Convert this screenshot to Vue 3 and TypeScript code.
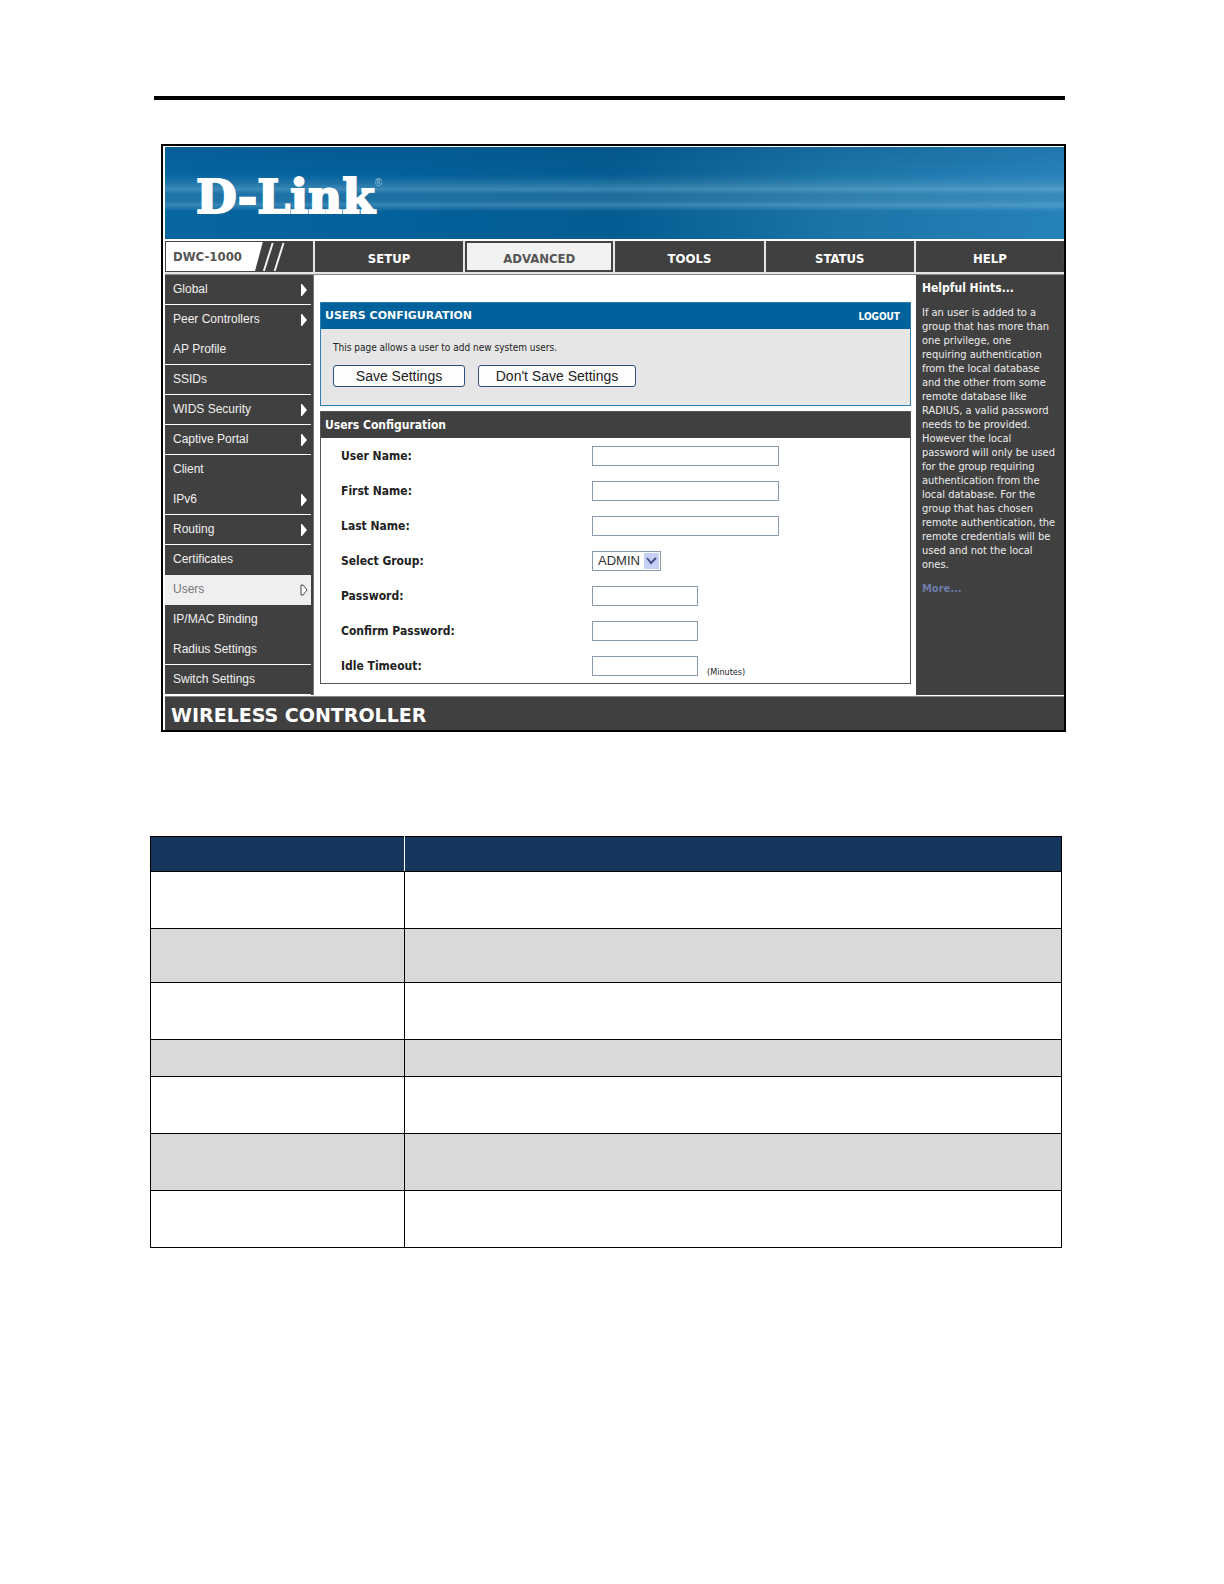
<script setup lang="ts">
import { ref } from 'vue'

interface SideItem {
  label: string
  arrow?: boolean
  line?: boolean
  active?: boolean
}

interface Field {
  id: string
  label: string
  kind: 'text' | 'password' | 'select'
  short?: boolean
  note?: string
}

const tabs = ['SETUP', 'ADVANCED', 'TOOLS', 'STATUS', 'HELP']
const activeTab = ref('ADVANCED')

const sideItems: SideItem[] = [
  { label: 'Global', arrow: true, line: true },
  { label: 'Peer Controllers', arrow: true },
  { label: 'AP Profile', line: true },
  { label: 'SSIDs', line: true },
  { label: 'WIDS Security', arrow: true, line: true },
  { label: 'Captive Portal', arrow: true, line: true },
  { label: 'Client' },
  { label: 'IPv6', arrow: true, line: true },
  { label: 'Routing', arrow: true, line: true },
  { label: 'Certificates' },
  { label: 'Users', arrow: true, active: true },
  { label: 'IP/MAC Binding' },
  { label: 'Radius Settings', line: true },
  { label: 'Switch Settings', line: true },
]

const fields: Field[] = [
  { id: 'user-name', label: 'User Name:', kind: 'text' },
  { id: 'first-name', label: 'First Name:', kind: 'text' },
  { id: 'last-name', label: 'Last Name:', kind: 'text' },
  { id: 'group', label: 'Select Group:', kind: 'select' },
  { id: 'password', label: 'Password:', kind: 'password', short: true },
  { id: 'confirm', label: 'Confirm Password:', kind: 'password', short: true },
  { id: 'idle', label: 'Idle Timeout:', kind: 'text', short: true, note: '(Minutes)' },
]

const rowSizes = ['tall', 'mid', 'tall', 'low', 'tall', 'tall', 'tall']
</script>

<template>
  <main class="page">
    <hr class="rule" />

    <section class="frame">
      <header class="banner">
        <div class="logo">D-Link<sup>®</sup></div>
      </header>

      <nav class="tabs">
        <div class="model">
          <span class="model-name">DWC-1000</span>
          <svg class="slashes" viewBox="0 0 58 30" preserveAspectRatio="none" aria-hidden="true">
            <path d="M0 0H8L0 30Z" fill="#fff" />
            <path d="M18 1L9 30M29 1L20 30" stroke="#f4f4f4" stroke-width="2" fill="none" />
          </svg>
        </div>
        <a
          v-for="tab in tabs"
          :key="tab"
          href="#"
          class="tab"
          :class="{ active: tab === activeTab }"
          @click.prevent="activeTab = tab"
        >{{ tab }}</a>
      </nav>

      <div class="body">
        <nav class="side">
          <a
            v-for="item in sideItems"
            :key="item.label"
            href="#"
            class="side-item"
            :class="{ line: item.line, active: item.active }"
          >
            <span>{{ item.label }}</span>
            <svg v-if="item.arrow" width="8" height="12" viewBox="0 0 8 12" aria-hidden="true">
              <path v-if="item.active" d="M1 1H3L7 6L3 11H1Z" fill="#fff" stroke="#444" />
              <path v-else d="M1 0H2L7 6L2 12H1Z" fill="#fff" />
            </svg>
          </a>
        </nav>

        <div class="content">
          <section class="panel intro">
            <div class="panel-head">
              <h1>USERS CONFIGURATION</h1>
              <a href="#" class="logout">LOGOUT</a>
            </div>
            <div class="intro-body">
              <p>This page allows a user to add new system users.</p>
              <div class="buttons">
                <button type="submit" form="user-form" class="save">Save Settings</button>
                <button type="reset" form="user-form" class="discard">Don't Save Settings</button>
              </div>
            </div>
          </section>

          <section class="panel settings">
            <div class="panel-head">
              <h2>Users Configuration</h2>
            </div>
            <form id="user-form" @submit.prevent>
              <div v-for="f in fields" :key="f.id" class="row">
                <label :for="f.id">{{ f.label }}</label>
                <span v-if="f.kind === 'select'" class="select">
                  <select :id="f.id">
                    <option>ADMIN</option>
                  </select>
                  <svg width="15" height="16" viewBox="0 0 15 16" aria-hidden="true">
                    <rect width="15" height="16" rx="1" fill="#c6cff4" />
                    <path d="M3 5L7 10L12 5" fill="none" stroke="#42508a" stroke-width="2" />
                  </svg>
                </span>
                <input v-else :id="f.id" :type="f.kind" :class="{ short: f.short }" />
                <span v-if="f.note" class="note">{{ f.note }}</span>
              </div>
            </form>
          </section>
        </div>

        <aside class="hints">
          <h3>Helpful Hints...</h3>
          <p>
            If an user is added to a<br />group that has more than<br />one privilege, one<br />requiring
            authentication<br />from the local database<br />and the other from some<br />remote database
            like<br />RADIUS, a valid password<br />needs to be provided.<br />However the local<br />password
            will only be used<br />for the group requiring<br />authentication from the<br />local database.
            For the<br />group that has chosen<br />remote authentication, the<br />remote credentials will
            be<br />used and not the local<br />ones.
          </p>
          <a href="#">More...</a>
        </aside>
      </div>

      <footer class="foot">WIRELESS CONTROLLER</footer>
    </section>

    <table class="fields">
      <thead>
        <tr>
          <th class="name"></th>
          <th></th>
        </tr>
      </thead>
      <tbody>
        <tr v-for="(size, i) in rowSizes" :key="i" :class="size">
          <td></td>
          <td></td>
        </tr>
      </tbody>
    </table>
  </main>
</template>

<style>
body {
  margin: 0;
  background: #fff;
}
</style>

<style scoped>
* {
  box-sizing: border-box;
}

.page {
  padding: 96px 158px 96px 150px;
  font-family: "DejaVu Sans Condensed", "DejaVu Sans", sans-serif;
  font-size: 11px;
  color: #222;
}

a {
  color: inherit;
  text-decoration: none;
}

h1,
h2,
h3,
p {
  margin: 0;
}

.rule {
  height: 4px;
  margin: 0 1px 44px 4px;
  border: 0;
  background: #000;
}

.frame {
  margin-left: 11px;
  padding: 1px 0 0 2px;
  border: 2px solid #000;
  background: #fff;
}

.banner {
  display: flex;
  align-items: center;
  height: 92px;
  padding: 8px 0 0 31px;
  background:
    linear-gradient(
      to bottom,
      rgba(0, 40, 80, 0.12) 0,
      rgba(120, 180, 210, 0) 30%,
      rgba(130, 185, 210, 0.22) 40%,
      rgba(150, 200, 225, 0.38) 46%,
      rgba(130, 175, 200, 0.2) 51%,
      rgba(130, 175, 200, 0.2) 58%,
      rgba(150, 200, 225, 0.34) 63%,
      rgba(120, 180, 210, 0) 70%
    ),
    linear-gradient(to right, #0765a0 0, #04609a 28%, #055c92 50%, #1c74a8 75%, #2782ba 100%);
}

.logo {
  font: bold 47px/56px "DejaVu Serif", serif;
  color: #fff;
  -webkit-text-stroke: 2px #fff;
}

.logo sup {
  font: 10px/10px "Liberation Sans", sans-serif;
  vertical-align: 27px;
  color: #9cc8e2;
  -webkit-text-stroke: 0;
}

.tabs {
  display: grid;
  grid-template-columns: 148px repeat(5, 1fr);
  column-gap: 2px;
  margin-top: 2px;
  border-bottom: 1px solid #888;
  padding-bottom: 2px;
  background: #e4e4e4;
}

.model,
.tab {
  display: flex;
  height: 31px;
  border: 1px solid #444;
  background: #404040;
}

.model-name {
  flex: 0 0 89px;
  padding-left: 7px;
  background: #fff;
  font: bold 13px/30px "DejaVu Sans Condensed", "DejaVu Sans", sans-serif;
  color: #555;
}

.slashes {
  width: 57px;
  height: 29px;
}

.tab {
  align-items: center;
  justify-content: center;
  padding-top: 3px;
  font-weight: bold;
  font-size: 13px;
  color: #fff;
}

.tab.active {
  border: 2px solid #444;
  background: #f3f2f2;
  color: #555;
}

.body {
  display: grid;
  grid-template-columns: 149px 1fr 148px;
  border-bottom: 1px solid #fff;
}

.side {
  padding-right: 2px;
  border-right: 1px solid #777;
  background: #404040;
  font: 12px/29px "Liberation Sans", Arial, sans-serif;
  color: #f0f0f0;
}

.side-item {
  display: flex;
  align-items: center;
  justify-content: space-between;
  height: 30px;
  padding: 0 3px 0 8px;
  border-bottom: 1px solid transparent;
}

.side-item.line {
  border-bottom-color: #fff;
}

.side-item.active {
  background: #efefef;
  color: #777;
}

.content {
  padding: 27px 5px 10px 6px;
}

.panel {
  border: 1px solid #555;
}

.panel-head {
  display: flex;
  align-items: center;
  justify-content: space-between;
  height: 26px;
  padding: 0 10px 0 4px;
  background: #404040;
  color: #fff;
}

.panel-head h1 {
  font: bold 11px/16px "DejaVu Sans", sans-serif;
}

.panel-head h2 {
  font-size: 12px;
  line-height: 16px;
}

.logout {
  font-weight: bold;
  font-size: 10px;
}

.intro {
  margin-bottom: 5px;
  border-color: #2c7fae;
}

.intro .panel-head {
  background: #00629d;
}

.intro-body {
  padding: 12px 12px 18px;
  background: #e6e6e6;
  font-size: 10px;
  line-height: 14px;
}

.buttons {
  display: flex;
  gap: 13px;
  margin-top: 10px;
}

button {
  height: 22px;
  padding: 0;
  border: 1px solid #2f4f7f;
  border-radius: 3px;
  background: #fdfdfd;
  font: 14px/18px "Liberation Sans", Arial, sans-serif;
  color: #222;
}

.save {
  width: 132px;
}

.discard {
  width: 158px;
}

.row {
  display: flex;
  align-items: center;
  height: 35px;
  padding-left: 20px;
}

label {
  flex: 0 0 251px;
  font-weight: bold;
  font-size: 12px;
}

input {
  width: 187px;
  height: 20px;
  border: 1px solid #8a9bb0;
  background: #fff;
}

input.short {
  width: 106px;
}

.select {
  position: relative;
  display: flex;
}

select {
  width: 69px;
  height: 20px;
  padding: 0 0 0 5px;
  border: 1px solid #8a9bb0;
  border-radius: 0;
  background: #fff;
  appearance: none;
  font: 13px/18px "Liberation Sans", Arial, sans-serif;
  color: #333;
}

.select svg {
  position: absolute;
  top: 2px;
  right: 2px;
}

.note {
  align-self: flex-end;
  margin-left: 9px;
  font-size: 9px;
  line-height: 22px;
}

.hints {
  padding: 6px 0 0 6px;
  background: #404040;
  line-height: 14px;
  color: #eee;
}

.hints h3 {
  margin-bottom: 11px;
  font-size: 12px;
  line-height: 14px;
  color: #fff;
}

.hints p {
  white-space: nowrap;
}

.hints a {
  display: block;
  margin-top: 10px;
  font-weight: bold;
  color: #6d7ba8;
}

.foot {
  height: 34px;
  padding-left: 6px;
  border-top: 1px solid #888;
  background: #404040;
  font: bold 19px/36px "DejaVu Sans", sans-serif;
  color: #fff;
}

.fields {
  width: calc(100% - 4px);
  margin-top: 104px;
  border-collapse: collapse;
  table-layout: fixed;
}

.fields th,
.fields td {
  padding: 0;
  border: 1px solid #000;
}

.fields th {
  height: 35px;
  background: #17365d;
}

.fields .name {
  width: 254px;
  border-right-color: #fff;
}

.fields tbody tr:nth-child(even) {
  background: #d9d9d9;
}

.tall td {
  height: 57px;
}

.mid td {
  height: 54px;
}

.low td {
  height: 37px;
}
</style>
